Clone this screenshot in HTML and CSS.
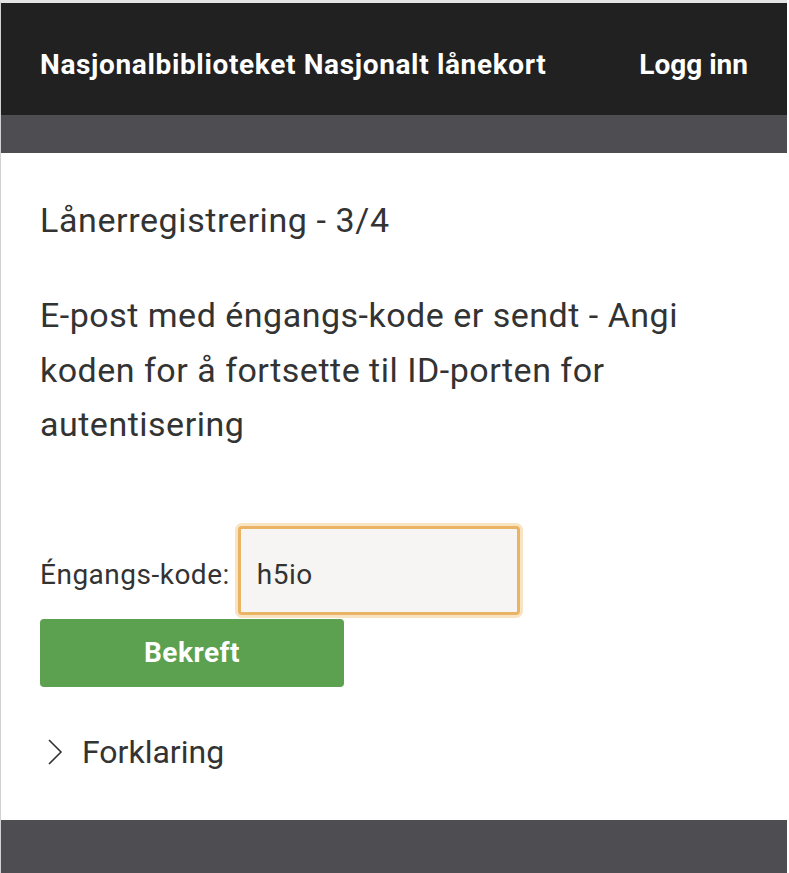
FILE: index.html
```html
<!DOCTYPE html>
<html lang="no">
<head>
<meta charset="utf-8">
<title>Nasjonalt lånekort</title>
<link rel="stylesheet" href="styles.css">
</head>
<body>
<div class="frame">
  <header class="topbar">
    <span class="brand">Nasjonalbiblioteket Nasjonalt lånekort</span>
    <a class="login" href="#">Logg inn</a>
  </header>
  <div class="subbar"></div>
  <main class="content">
    <h1 class="title">Lånerregistrering - 3/4</h1>
    <p class="lead">E-post med éngangs-kode er sendt - Angi koden for å fortsette til ID-porten for autentisering</p>
    <form class="form">
      <div class="field">
        <label class="label" for="kode">Éngangs-kode:</label>
        <input class="input" id="kode" type="text" value="h5io">
      </div>
      <button class="btn" type="button">Bekreft</button>
    </form>
    <div class="details">
      <svg class="chev" width="16" height="26" viewBox="0 0 16 26"><path d="M2 1 L14 13 L2 25" fill="none" stroke="#333" stroke-width="1.6"/></svg>
      <span class="details-text">Forklaring</span>
    </div>
  </main>
  <footer class="footer"></footer>
</div>
</body>
</html>
```

FILE: styles.css
```css
html, body {
  margin: 0;
  padding: 0;
  background: #ffffff;
}
body {
  font-family: Roboto, "Open Sans", sans-serif;
  color: #333333;
}
.frame {
  border-top: 3px solid #e4e4e4;
  border-left: 1px solid #d2d2d2;
  margin-right: 2px;
  min-height: 870px;
  display: flex;
  flex-direction: column;
}
.topbar {
  background: #212121;
  height: 112px;
  box-sizing: border-box;
  display: flex;
  align-items: center;
  justify-content: space-between;
  padding: 10px 39px 0 39px;
  color: #ffffff;
}
.brand {
  font-weight: 700;
  font-size: 28px;
  letter-spacing: 0.65px;
}
.login {
  color: #ffffff;
  text-decoration: none;
  font-weight: 700;
  font-size: 28px;
  letter-spacing: 0;
}
.subbar {
  background: #4e4d52;
  height: 38px;
}
.content {
  flex: 1;
  padding: 0 39px;
}
.title {
  font-weight: 400;
  font-size: 34px;
  margin: 47px 0 0 0;
  line-height: 40px;
  letter-spacing: 0.6px;
}
.lead {
  font-size: 34px;
  line-height: 54.5px;
  margin: 48px 0 0 0;
  letter-spacing: 0.5px;
}
.form {
  margin-top: 74px;
}
.field {
  display: flex;
  align-items: center;
  gap: 7px;
}
.label {
  font-size: 28px;
  letter-spacing: 0.5px;
  padding-top: 8px;
}
.input {
  width: 282px;
  height: 89px;
  box-sizing: border-box;
  margin: 0 0 0 1px;
  background: #f6f5f3;
  border: 3px solid #eab465;
  box-shadow: 0 0 0 3px rgba(240, 195, 120, 0.45);
  border-radius: 4px;
  font-family: Roboto, "Open Sans", sans-serif;
  font-size: 28px;
  letter-spacing: 0.5px;
  color: #333333;
  padding: 8px 0 0 16px;
  outline: none;
}
.btn {
  display: block;
  margin-top: 4px;
  width: 304px;
  height: 68px;
  background: #5ba150;
  border: none;
  border-radius: 4px;
  color: #ffffff;
  font-family: Roboto, "Open Sans", sans-serif;
  font-weight: 700;
  font-size: 28px;
  letter-spacing: 0.5px;
}
.details {
  display: flex;
  align-items: center;
  gap: 19px;
  margin-top: 45px;
  padding-left: 7px;
  height: 40px;
}
.chev {
  display: block;
}
.details-text {
  font-size: 32px;
  letter-spacing: 0;
}
.footer {
  background: #4e4d52;
  height: 53px;
}
```
